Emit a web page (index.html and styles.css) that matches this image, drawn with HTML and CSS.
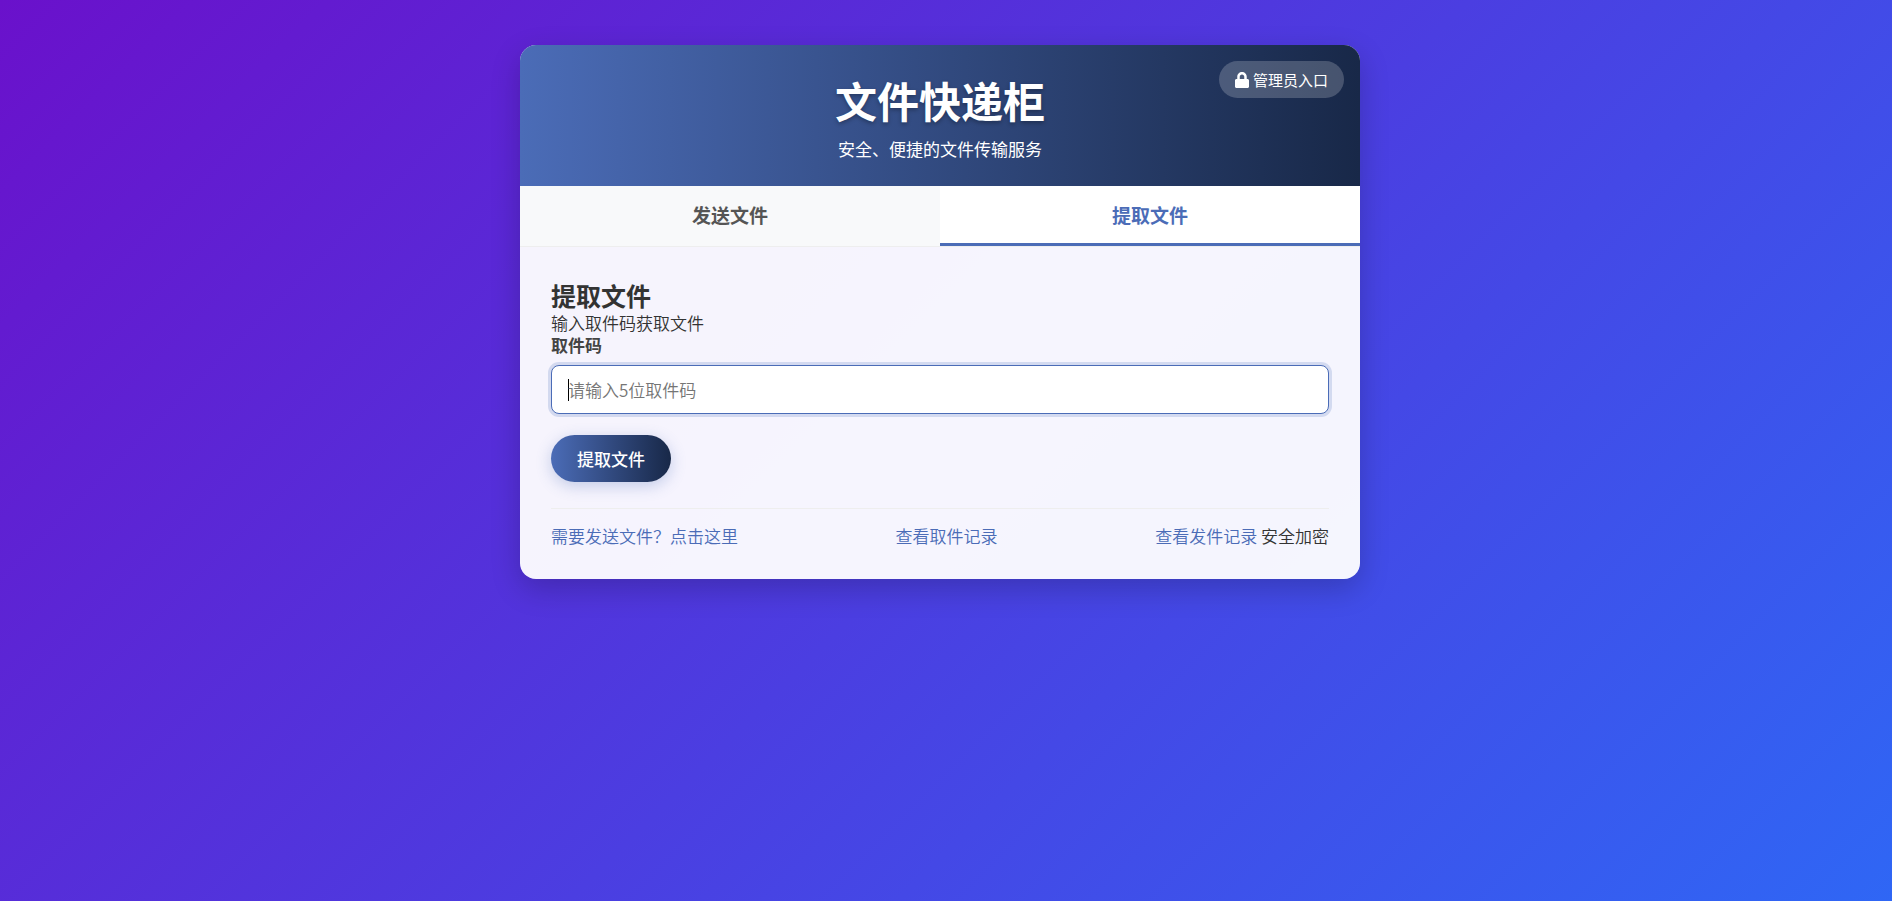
FILE: index.html
```html
<!DOCTYPE html>
<html lang="zh-CN">
<head>
    <meta charset="UTF-8">
    <meta name="viewport" content="width=device-width, initial-scale=1.0">
    <title>文件快递柜</title>
    <link rel="stylesheet" href="styles.css">
</head>
<body>
    <div class="container">
        <header class="header">
            <h1>文件快递柜</h1>
            <p>安全、便捷的文件传输服务</p>
            <a class="admin-link" href="#admin">
                <svg class="lock-icon" viewBox="0 0 448 512" aria-hidden="true">
                    <path d="M400 224h-24v-72C376 68.200 307.800 0 224 0S72 68.200 72 152v72H48c-26.500 0-48 21.500-48 48v192c0 26.500 21.500 48 48 48h352c26.500 0 48-21.500 48-48V272c0-26.500-21.500-48-48-48zm-104 0H152v-72c0-39.700 32.300-72 72-72s72 32.300 72 72v72z"/>
                </svg>
                <span>管理员入口</span>
            </a>
        </header>

        <nav class="tabs">
            <button type="button" class="tab">发送文件</button>
            <button type="button" class="tab active">提取文件</button>
        </nav>

        <main class="content">
            <h2>提取文件</h2>
            <p>输入取件码获取文件</p>
            <form class="pickup-form">
                <label for="pickupCode">取件码</label>
                <input type="text" id="pickupCode" maxlength="5" placeholder="请输入5位取件码" autocomplete="off" autofocus>
                <button type="submit" class="btn">提取文件</button>
            </form>
            <div class="footer-links">
                <a href="#send">需要发送文件？点击这里</a>
                <a href="#pickup-log">查看取件记录</a>
                <div><a href="#send-log">查看发件记录</a> <span>安全加密</span></div>
            </div>
        </main>
    </div>
</body>
</html>
```
FILE: styles.css
```css
* {
    margin: 0;
    padding: 0;
    box-sizing: border-box;
}

body {
    min-height: 100vh;
    padding: 45px 32px 45px 20px;
    background: linear-gradient(135deg, #6a11cb 0%, #2575fc 117%);
    color: #333;
    font-family: "Noto Sans CJK SC", sans-serif;
    font-size: 17px;
    font-weight: 350;
    line-height: 22px;
}

a {
    color: #4b6cb7;
    text-decoration: none;
}

.container {
    max-width: 840px;
    margin: 0 auto;
    background: rgba(255, 255, 255, 0.95);
    border-radius: 16px;
    box-shadow: 0 10px 30px rgba(0, 0, 0, 0.2);
    overflow: hidden;
}

.header {
    position: relative;
    padding: 22px 25px 26px;
    background: linear-gradient(to right, #4b6cb7, #182848);
    color: #fff;
    font-weight: 400;
    text-align: center;
}

.header h1 {
    margin-bottom: 5px;
    font-size: 42px;
    line-height: 66px;
    text-shadow: 0 2px 4px rgba(0, 0, 0, 0.3);
}

.admin-link {
    position: absolute;
    top: 16px;
    right: 16px;
    display: flex;
    align-items: center;
    gap: 4px;
    height: 37px;
    padding: 0 16px;
    border-radius: 20px;
    background: rgba(255, 255, 255, 0.2);
    color: #fff;
    font-size: 15px;
}

.lock-icon {
    width: 14px;
    height: 16px;
    fill: currentColor;
}

.tabs {
    display: flex;
    background: #f8f9fa;
    border-bottom: 1px solid #eee;
}

.tab {
    flex: 1;
    height: 60px;
    padding-bottom: 3px;
    border: none;
    background: none;
    color: #555;
    font-family: inherit;
    font-size: 19px;
    font-weight: 700;
    cursor: pointer;
}

.tab.active {
    padding-bottom: 0;
    border-bottom: 3px solid #4b6cb7;
    background: #fff;
    color: #4b6cb7;
}

.content {
    padding: 31px 31px 32px;
}

.content h2 {
    font-size: 25px;
    line-height: 34px;
}

.pickup-form label {
    display: block;
    margin-bottom: 9px;
    color: #444;
    font-weight: 700;
}

.pickup-form input {
    display: block;
    width: 100%;
    height: 49px;
    margin-bottom: 21px;
    padding: 0 16px;
    border: 1px solid #4b6cb7;
    border-radius: 8px;
    outline: none;
    /* caret bar at the start of the empty field */
    background: linear-gradient(#000, #000) 16px center / 1px 22px no-repeat #fff;
    box-shadow: 0 0 0 3px rgba(75, 108, 183, 0.2);
    font: inherit;
}

.pickup-form input:not(:placeholder-shown) {
    background: #fff;
}

.pickup-form input::placeholder {
    color: #757575;
}

.btn {
    display: block;
    height: 47px;
    padding: 0 26px;
    border: none;
    border-radius: 24px;
    background: linear-gradient(to right, #4b6cb7, #182848);
    box-shadow: 0 4px 15px rgba(75, 108, 183, 0.3);
    color: #fff;
    font: inherit;
    font-weight: 500;
    cursor: pointer;
}

.footer-links {
    display: flex;
    justify-content: space-between;
    margin-top: 26px;
    padding-top: 16px;
    border-top: 1px solid #eee;
}
```
